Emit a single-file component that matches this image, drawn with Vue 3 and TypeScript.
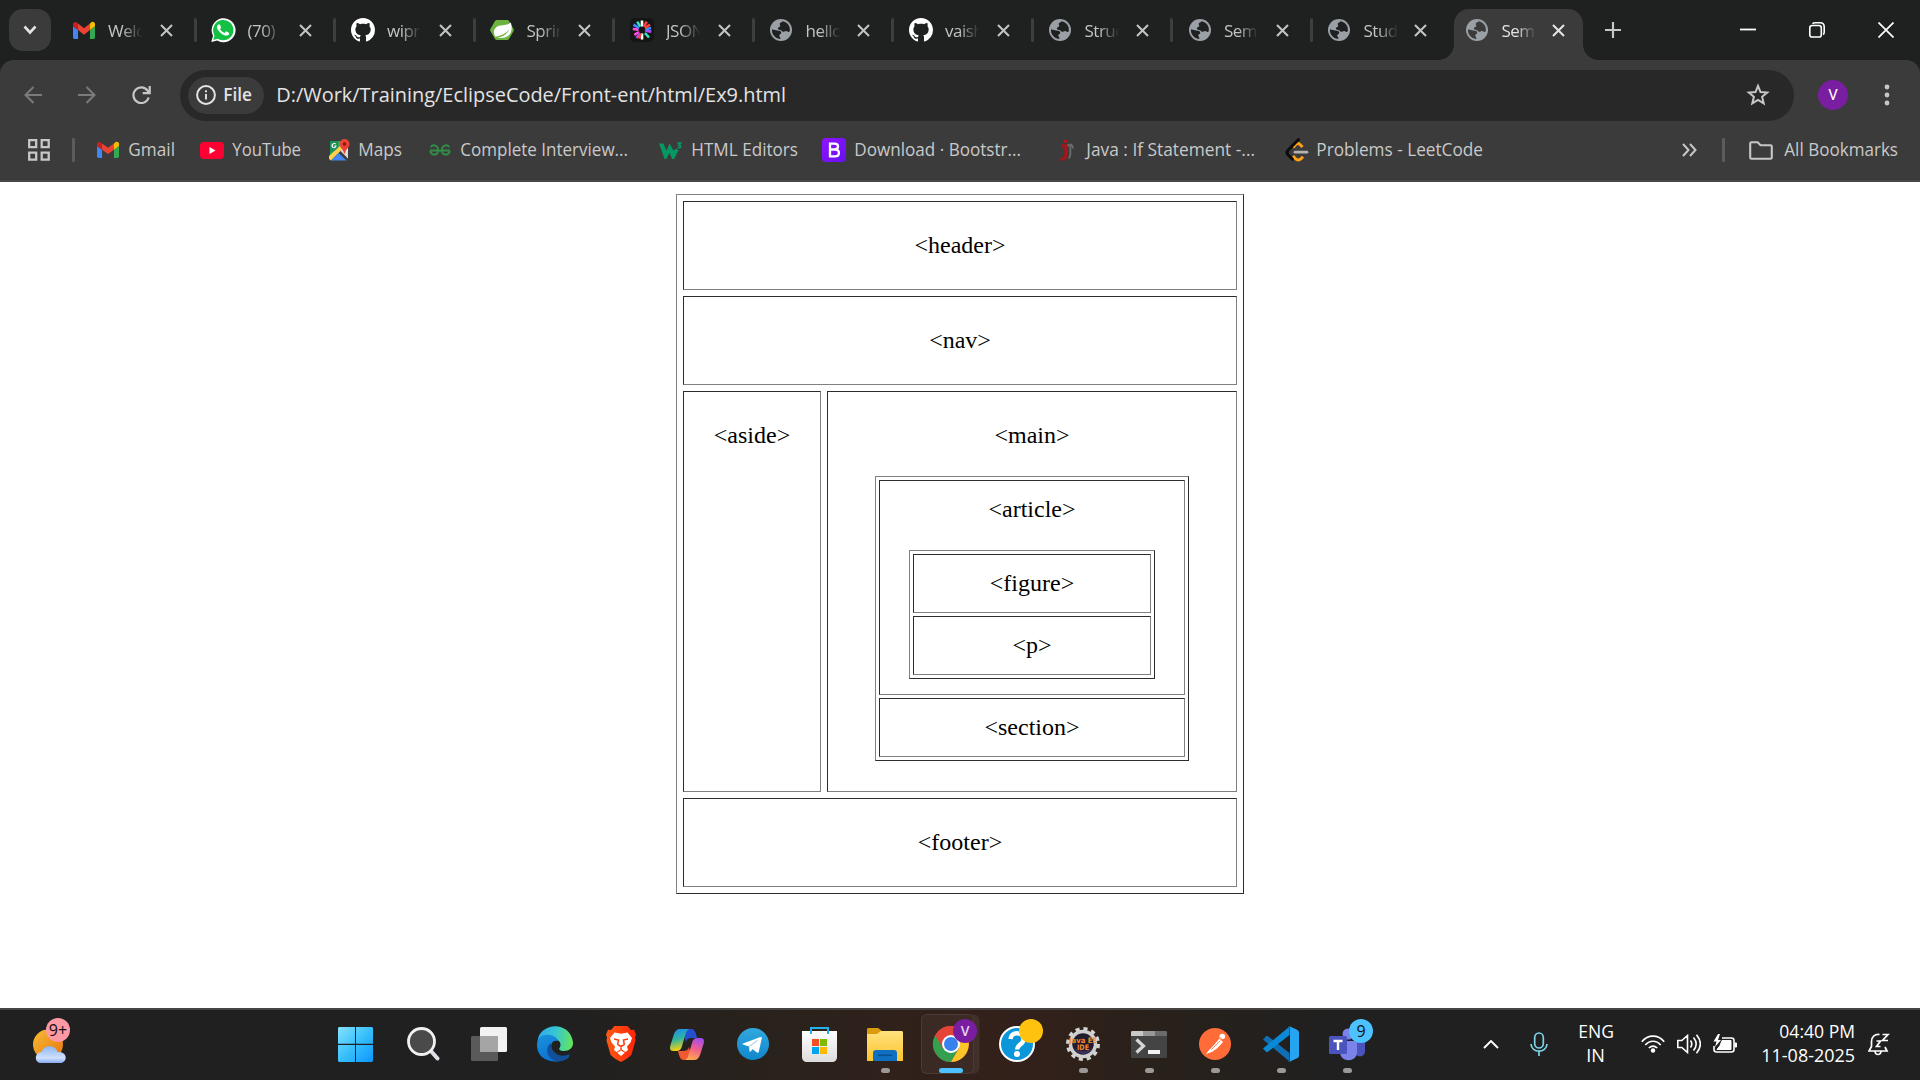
<script setup lang="ts">
import { h, type FunctionalComponent } from 'vue'

/* Line of interface text set to an exact advance width. */
const Label: FunctionalComponent<{
  text: string
  width: number
  size?: number
  color?: string
  weight?: number
  base?: number
}> = (p) =>
  h(
    'svg',
    { width: p.width, height: 24, viewBox: `0 0 ${p.width} 24`, style: 'display:block;overflow:visible;flex:none' },
    [
      h(
        'text',
        {
          x: -0.7,
          y: p.base ?? 18,
          textLength: p.width + 0.7,
          lengthAdjust: 'spacingAndGlyphs',
          fill: p.color ?? '#c9c9c9',
          'font-size': p.size ?? 17.6,
          'font-weight': p.weight ?? 400,
          'font-family': "'Open Sans', 'Noto Sans', sans-serif",
        },
        p.text,
      ),
    ],
  )
Label.props = ['text', 'width', 'size', 'color', 'weight', 'base']

const Icon: FunctionalComponent<{ name: string; w: number; h?: number }> = (p) =>
  h('svg', {
    width: p.w,
    height: p.h ?? p.w,
    viewBox: icons[p.name][0],
    preserveAspectRatio: 'none',
    fill: 'none',
    style: 'display:block;flex:none;overflow:visible',
    innerHTML: icons[p.name][1],
  })
Icon.props = ['name', 'w', 'h']

const icons: Record<string, [string, string]> = {
  gmail: ['0 0 24 18', '<path fill="#4285f4" d="M1.6 18h3.9V8.6L0 4.5v11.9C0 17.3.7 18 1.6 18z"/><path fill="#34a853" d="M18.5 18h3.9c.9 0 1.6-.7 1.6-1.6V4.500l-5.500 4.100z"/><path fill="#fbbc04" d="M18.500 1.700v6.900L24 4.500V2.300c0-2-2.300-3.200-3.900-2z"/><path fill="#ea4335" d="M5.500 8.600V1.700L12 6.600l6.500-4.900v6.900L12 13.500z"/><path fill="#c5221f" d="M0 2.300v2.200l5.500 4.100V1.700L3.900.4C2.300-.8 0 .3 0 2.300z"/>'],
  whatsapp: ['0 0 24 24', '<path fill="#fff" d="M.3 24l1.700-6.200A12 12 0 1 1 6.300 22.400z"/><path fill="#12c143" d="M2.300 21.900l1.200-4.500A10.200 10.200 0 1 1 6.700 20.700z"/><path fill="#fff" d="M17.472 14.382c-.297-.149-1.758-.867-2.03-.967-.273-.099-.471-.148-.67.15-.197.297-.767.966-.94 1.164-.173.199-.347.223-.644.075-.297-.15-1.255-.463-2.39-1.475-.883-.788-1.48-1.761-1.653-2.059-.173-.297-.018-.458.13-.606.134-.133.298-.347.446-.52.149-.174.198-.298.298-.497.099-.198.05-.371-.025-.52-.075-.149-.669-1.612-.916-2.207-.242-.579-.487-.5-.669-.51-.173-.008-.371-.01-.57-.01-.198 0-.52.074-.792.372-.272.297-1.04 1.016-1.04 2.479 0 1.462 1.065 2.875 1.213 3.074.149.198 2.096 3.2 5.077 4.487.709.306 1.262.489 1.694.625.712.227 1.36.195 1.871.118.571-.085 1.758-.719 2.006-1.413.248-.694.248-1.289.173-1.413-.074-.124-.272-.198-.57-.347"/>'],
  github: ['0 0 16 16', '<path fill="#fff" d="M8 0C3.580 0 0 3.580 0 8c0 3.540 2.290 6.530 5.470 7.590.4.070.550-.170.550-.380 0-.190-.010-.820-.010-1.490-2.010.370-2.530-.490-2.690-.940-.090-.230-.480-.940-.820-1.130-.280-.150-.680-.520-.010-.530.630-.010 1.080.580 1.230.820.720 1.210 1.870.870 2.330.660.070-.520.280-.870.510-1.070-1.780-.2-3.640-.890-3.640-3.950 0-.870.310-1.590.820-2.150-.080-.2-.360-1.020.080-2.120 0 0 .670-.210 2.200.820.640-.180 1.320-.270 2-.270s1.360.090 2 .270c1.530-1.040 2.200-.820 2.200-.820.440 1.100.160 1.920.080 2.120.510.560.820 1.270.820 2.150 0 3.070-1.870 3.750-3.650 3.950.290.250.540.730.540 1.480 0 1.070-.010 1.930-.010 2.200 0 .210.150.460.550.380A8.010 8.010 0 0 0 16 8c0-4.420-3.580-8-8-8z"/>'],
  spring: ['0 0 24 24', '<path fill="#6db33f" d="M7 1.200h10c.9 0 1.600.4 2 1.100l4.600 8.500c.4.8.4 1.600 0 2.400L19 21.700c-.4.700-1.100 1.100-2 1.100H7c-.9 0-1.600-.4-2-1.100L.4 13.200c-.4-.8-.4-1.600 0-2.400L5 2.300c.4-.7 1.100-1.100 2-1.100z"/><path fill="#fff" d="M20.800 3.800c.9 3.500 1.700 9.300-1.200 13.200-2.800 3.700-7.900 4.400-13 3.300 6.700-.4 10.800-4.200 12.600-8.500-3.200 4.300-7.600 6.600-13.800 7.500-3.400-5.200-.7-11.200 4.800-12.200 4.200-.8 8.400-.4 10.600-3.300z"/>'],
  json: ['0 0 24 24', '<rect width="24" height="24" rx="5" fill="#151515"/><g stroke-width="2.600"><path stroke="#fff" d="M12 2.500v6M12 15.500v6"/><path stroke="#ff4fd8" d="M2.800 11l5.800.6M4.300 16.800l4.700-2.800"/><path stroke="#a64dff" d="M6.500 20l3.400-4.500M15.300 12.600l6 1"/><path stroke="#34e0c2" d="M7.200 3.600l3 5M15 15l4 4.500"/><path stroke="#3f8cff" d="M3.500 6.600L9 10M15.200 11.300l6-1.300"/><path stroke="#ff4040" d="M16.800 3.600l-3 5M20 6.500l-5 3.500M10.500 15.500l-1.500 5"/></g>'],
  globe: ['0 0 22 22', '<circle cx="11" cy="11" r="11" fill="#9aa0a6"/><path fill="var(--land)" d="M12.500 2.300c-.6 1.300-2.300 1.200-2.700 2.200-.4 1.100.7 1.800.4 2.700-.4 1.100-2.500.8-2.400 2.200.1 1.300 2.100 1.300 3.300 1.900.9.500 1 1.500 2 1.500 1.100 0 1.900-1.100 3.100-.9.9.1 1.500 1 2.400 1 .6 0 .9-.3 1.100-.7C20.700 7.500 17.500 3 12.500 2.300z"/><path fill="var(--land)" d="M2 10.300c1.600.6 4.500 1.100 7 1.500 1.600.3 2.300 1 2.200 2.200-.2 1.200-2 1.200-2 2.500 0 1.200 1.300 1.500 1.200 2.700 0 .4-.2.700-.5.800C5.300 19.500 1.500 15.500 2 10.300z"/>'],
  youtube: ['0 0 24 17', '<rect width="24" height="17" rx="4" fill="#ff0033"/><path fill="#fff" d="M9.500 5l6 3.500-6 3.500z"/>'],
  maps: ['0 0 22 22', '<path fill="#34a853" d="M2 2h14v6L2 20.500z"/><path fill="#1e8e5a" d="M2 2h8v8L2 14z"/><path fill="#f1f1f1" d="M12 10l8 9.500V9z"/><path fill="#ffd04b" d="M1 17L12.500 6.500l2.500 3L3 21.500 1 20z"/><path fill="#4285f4" d="M3 21.500L10.500 14l8 7.500z"/><path fill="#d9d9d9" d="M12.500 12l7.500 7.500v-8z"/><path fill="#fff" d="M8.500 6.500H6.300v1h1.200c-.5 1.300-2.700 1-2.700-.8 0-1.600 1.600-2.200 2.600-1.300l.7-.8C6.300 3.100 3.500 4.200 3.500 6.700c0 3.400 5.100 3.300 5-.2z"/><path fill="#ea4335" d="M16.500 0a5 5 0 0 1 5 5c0 3.500-4.100 5.500-4.500 9.500h-1c-.4-4-4.500-6-4.500-9.500a5 5 0 0 1 5-5z"/><circle cx="16.500" cy="5" r="1.800" fill="#7d1d16"/>'],
  gfg: ['0 0 24 12', '<g stroke="#2f8d46" stroke-width="2"><path d="M1 6.500h21.800M2 3.200C3.500.6 9.800.2 10 6.200c0 5.500-7.800 6-8.700.5M22 3.200C20.500.6 14.200.2 14 6.200c0 5.500 7.800 6 8.700.5"/></g>'],
  w3: ['0 0 24 18', '<path fill="#059862" d="M0 1.500h4.600l3.200 7.700L11 1.500l4.200 7.700 2.600-2.400c.8.900 1.600 1.300 2.700 1.400L15.800 18h-2.200L11 11.500 7.600 18H5.800z"/><path stroke="#059862" stroke-width="1.700" d="M19.300 1.200h3.200l-1.700 2.200c2.700 0 2.200 3.300-1.300 2.400"/>'],
  bootstrap: ['0 0 24 24', '<defs><linearGradient id="bs" x2="1" y2="1"><stop stop-color="#9013fe"/><stop offset="1" stop-color="#6610f2"/></linearGradient></defs><rect width="24" height="24" rx="4" fill="url(#bs)"/><path stroke="#fff" stroke-width="2.300" d="M8 5.700h4.500c4.700 0 4.700 5.800 0 5.800H8h5c5.200 0 5.200 6.800 0 6.800H8z"/>'],
  java: ['0 0 16 22', '<ellipse cx="6.500" cy="2.300" rx="2.500" ry="1.800" fill="#b0161c"/><path stroke="#a3161c" stroke-width="3.400" d="M2.500 7h4.500v8.500c0 3.500-2 4.800-5.500 5"/><path stroke="#6a6a6a" stroke-width="2" d="M8.500 7c3-3 5.500-1 5.500 2.500M11.500 6.500c-1 4 1.500 8-1.500 13"/>'],
  leetcode: ['0 0 24 24', '<path stroke="#ffa116" stroke-width="3" d="M8 9.500l3-3.200c1.500-1.500 3-1 4.500.7l2 2M8 18l2.500 2.700c1.700 1.700 4 1.500 5.500 0l2-2"/><path stroke="#0c0c0c" stroke-width="3" stroke-linecap="round" d="M13.500 1.500L3 12.200c-1.400 1.500-1.400 3 0 4.500l4.500 4.500"/><path stroke="#b3b3b3" stroke-width="2.700" stroke-linecap="round" d="M10 14.200h12"/>'],
  weather: ['0 0 33 34', '<defs><linearGradient id="sun" x2="1" y2="1"><stop stop-color="#f6bd35"/><stop offset="1" stop-color="#e8740c"/></linearGradient><linearGradient id="cld" x2="0" y2="1"><stop stop-color="#8fb6f2"/><stop offset=".7" stop-color="#cfe0fb"/><stop offset="1" stop-color="#84aaf0"/></linearGradient></defs><circle cx="15" cy="15.500" r="15" fill="url(#sun)"/><path fill="url(#cld)" d="M8 34c-7 0-7-11 1-11 1-7 13-8 15.500 0C35 22 35 34 27 34z"/>'],
  windows: ['0 0 35 35', '<defs><linearGradient id="win" gradientUnits="userSpaceOnUse" x1="0" y1="0" x2="35" y2="35"><stop stop-color="#85e1ff"/><stop offset=".5" stop-color="#38c0fb"/><stop offset="1" stop-color="#0b96fc"/></linearGradient></defs><path fill="url(#win)" d="M1 0h16v16.700H0V1zM18 0h16l1 1v15.700H18zM0 18h17v17H1l-1-1zM18 18h17v16l-1 1H18z"/>'],
  search: ['0 0 33 34', '<path stroke="#dfe1e8" stroke-width="4" stroke-linecap="round" d="M23.500 23.500l7 8"/><circle cx="14.500" cy="14.500" r="13" fill="#4a4a4a" stroke="#f0f1f3" stroke-width="2.800"/>'],
  taskview: ['0 0 36 34', '<rect x="9" width="27" height="25" rx="1.500" fill="#f2f2f2"/><rect y="9" width="27" height="25" rx="1.500" fill="#5a5a5a"/><path d="M9 9h18v16H9z" fill="#a5a5a5"/>'],
  edge: ['0 0 36 36', '<defs><linearGradient id="ea" x1="0" y1=".3" x2="1" y2=".4"><stop stop-color="#2fa8e8"/><stop offset=".5" stop-color="#35c6d5"/><stop offset="1" stop-color="#63e55b"/></linearGradient><linearGradient id="eb" x2=".5" y2="1"><stop stop-color="#1a92dc"/><stop offset="1" stop-color="#0d6fd0"/></linearGradient></defs><path fill="url(#ea)" d="M.5 15C3-4 33-5.500 36 16c.5 6-4 9-9 9-4 0-5.500-1.500-4.500-3 2-3 1-7-3-8.500C12 9 3 11 .5 15z"/><path fill="url(#eb)" d="M0 19C0 8 12 7 18 11c3 2 3.500 4 3 4-6-1.500-8 4-6 9 2 6 9 9 15 6 2-1 3-1 2 .5C26 39 0 38 0 19z"/><path fill="#124f9a" d="M14 17c-6 4-5 15 5 18 6 .5 11-2 13.500-5.500.5-1-.5-1.500-2-.700C24 32 13 27 14 17z"/>'],
  brave: ['0 0 30 36', '<defs><linearGradient id="br" x2="1"><stop stop-color="#ff5a14"/><stop offset="1" stop-color="#fb2508"/></linearGradient></defs><path fill="url(#br)" d="M8.500 0h13L25 4l3-.2 2 4.700-1 3 .5 3-4 14c-2 3-6 5-10.500 7.500C10.500 33.500 6.500 31.500 4.500 28.500l-4-14 .5-3-1-3 2-4.700L5 4z"/><path fill="#fff" d="M8.500 6.500l6.500 1.300 6.500-1.300 4.500 5.500-1.500 4.500-3.500 4 1 3.500-2.500 2-3-2h-3l-3 2-2.500-2 1-3.500-3.500-4L4 12z"/><path fill="#fff" d="M15 24.500l3.800 2.200L15 30l-3.800-3.300z"/><path stroke="#fb3f0e" stroke-width="1.500" d="M8 13l4.500 1-.8 4.500 3.300 2 3.300-2-.8-4.500 4.500-1M15 20.500V24"/>'],
  copilot: ['0 0 34 31', '<defs><linearGradient id="ca" x2=".2" y2="1"><stop stop-color="#1b8cf2"/><stop offset=".5" stop-color="#2eb3a2"/><stop offset="1" stop-color="#f2d113"/></linearGradient><linearGradient id="cb" x1=".7" x2=".4" y2="1"><stop stop-color="#a24cf0"/><stop offset=".5" stop-color="#f0608c"/><stop offset="1" stop-color="#ffa84e"/></linearGradient></defs><path fill="#2450d0" d="M12 0h9c3 0 4 2 5 5l1 4h-6c-3 0-4 1-5 4z"/><path fill="#f0582f" d="M22 31h-8c-3 0-4-2-5-5l-1-4h5c3 0 5-1 6-4z"/><path fill="url(#ca)" d="M10 0h9c-2 1-3 3-4 7l-3 10c-1 4-3 5-6 5H3c-3 0-3.500-3-2.500-6L4 5c1-3 3-5 6-5z"/><path fill="url(#cb)" d="M24 31h-9c2-1 3-3 4-7l3-10c1-4 3-5 6-5h3c3 0 3.500 3 2.500 6L30 26c-1 3-3 5-6 5z"/>'],
  telegram: ['0 0 32 32', '<defs><linearGradient id="tg" x2="0" y2="1"><stop stop-color="#32a8e0"/><stop offset="1" stop-color="#0f87cc"/></linearGradient></defs><circle cx="16" cy="16" r="16" fill="url(#tg)"/><path fill="#fff" d="M6 15.500L23.500 9c.8-.3 1.500.2 1.300 1.300l-3 13.500c-.2 1-1 1.200-1.800.7l-4.300-3.200-2.200 2.200c-.5.500-1 .3-1-.5l-.5-4.500L6 16.600c-.6-.3-.6-.8 0-1.100z"/><path stroke="#8fc8ea" stroke-width="1" d="M12 18.500l8.500-6"/>'],
  store: ['0 0 35 35', '<defs><linearGradient id="st" x2="0" y2="1"><stop stop-color="#fff"/><stop offset="1" stop-color="#dcdcdc"/></linearGradient></defs><path fill="url(#st)" d="M0 4h35v26c0 3-2 5-5 5H5c-3 0-5-2-5-5z"/><path stroke="#23b0ef" stroke-width="2" d="M9 7V1h17v6"/><path fill="#f25022" d="M10 12h7v7h-7z"/><path fill="#7fba00" d="M18 12h7v7h-7z"/><path fill="#00a4ef" d="M10 20h7v7h-7z"/><path fill="#ffb900" d="M18 20h7v7h-7z"/>'],
  explorer: ['0 0 36 33', '<defs><linearGradient id="fx" x2="0" y2="1"><stop stop-color="#ffe17e"/><stop offset="1" stop-color="#fdc52d"/></linearGradient></defs><path fill="#dc9b0c" d="M0 1.500C0 .6.600 0 1.500 0H11l4 3-3 4H0z"/><path fill="url(#fx)" d="M0 6h10l4-3h20.500c.9 0 1.500.6 1.500 1.500V33H0z"/><path fill="#0f6fc0" d="M6 33v-8c0-2 1-3 3-3h18c2 0 3 1 3 3v8z"/><path stroke="#0a4f91" stroke-width="1.500" d="M11 27.300h14"/>'],
  chrome: ['0 0 36 36', '<circle cx="18" cy="18" r="18" fill="#e33b2e"/><path fill="#2a9b46" d="M18 36A18 18 0 0 1 2.400 9L10.200 22.500 18 18l7.800 4.500z"/><path fill="#fcc31e" d="M18 36l7.800-13.500L18 10h16a18 18 0 0 1-16 26z"/><path fill="#e33b2e" d="M18 10h16A18 18 0 0 0 2.400 9l7.800 13.500z"/><circle cx="18" cy="18" r="9" fill="#fff"/><circle cx="18" cy="18" r="7" fill="#2f7cf0"/>'],
  help: ['0 0 36 36', '<circle cx="18" cy="18" r="17" fill="#0a96d8" stroke="#fff" stroke-width="2"/><path stroke="#fff" stroke-width="4.500" d="M11.500 13c.5-8 13-7.500 13 .5 0 5-6.500 5-6.500 10"/><circle cx="18" cy="28" r="3" fill="#fff"/>'],
  eclipse: ['0 0 34 34', '<circle cx="17" cy="17" r="15" stroke="#d4d4d4" stroke-width="4" stroke-dasharray="4 3.854"/><circle cx="17" cy="17" r="12.500" fill="#211b2e" stroke="#cfcfcf" stroke-width="3.500"/><path fill="#3c2f58" d="M8 21c5 4 13 4 18 0-2 8-15 8-18 0z"/><text x="17" y="15.500" text-anchor="middle" textLength="28" lengthAdjust="spacingAndGlyphs" font-family="\'DejaVu Sans\', sans-serif" font-size="7.500" font-weight="700" fill="#f08a28">Java EE</text><text x="17" y="23" text-anchor="middle" textLength="12" lengthAdjust="spacingAndGlyphs" font-family="\'DejaVu Sans\', sans-serif" font-size="7.500" font-weight="700" fill="#f08a28">IDE</text>'],
  terminal: ['0 0 36 27', '<rect width="36" height="27" rx="1.500" fill="#444"/><path fill="#c9c9c9" d="M0 5V1.500C0 .6.600 0 1.500 0H12v5z"/><path fill="#989898" d="M12 0h12v5H12z"/><path fill="#6b6b6b" d="M24 0h10.500c.9 0 1.500.6 1.500 1.500V5H24z"/><path stroke="#d6d6d6" stroke-width="3.200" d="M5.500 8.500l7 6.500-7 6.500"/><path fill="#f2f2f2" d="M17 19h12v4H17z"/>'],
  postman: ['0 0 32 32', '<circle cx="16" cy="16" r="16" fill="#ff6c37"/><circle cx="23.300" cy="8.500" r="2.800" fill="#fff"/><path fill="#fff" d="M20.500 10.500l3.500 3.500-5.500 6c-3 2.500-6 4.500-11.500 6 2-3 4.500-5.500 7.500-8.500z"/><path stroke="#ff6c37" stroke-width=".8" d="M12.500 21.500l9-9M21 9.500l3.500 3"/>'],
  vscode: ['0 0 36 36', '<path fill="#0f6fb5" d="M0 13.500l3-3.200c.6-.5 1.400-.5 2 0L26.500 27v8.500z"/><path fill="#0a8ad6" d="M0 22.500l3 3.200c.6.500 1.400.5 2 0L26.500 9V.500z"/><path fill="#25a4f2" d="M26.500.2L34 3.700c1.200.6 2 1.500 2 2.900v22.800c0 1.400-.8 2.300-2 2.900l-7.500 3.500c-.8.300-1.200.1-1.500-.2 1 .4 2-.3 2-1.600V2c0-1.300-1-2-2-1.600.3-.3.700-.5 1.500-.2z"/>'],
  teams: ['0 0 36 34', '<circle cx="31" cy="9" r="4" fill="#5059c9"/><circle cx="19" cy="7" r="5.500" fill="#7b83eb"/><path fill="#4b53bc" d="M26 15h10v9c0 5-5 7-9 4z"/><path fill="#7b83eb" d="M12 14h14c1.200 0 2 .8 2 2v9c0 11-17 11-17 0z"/><rect y="9" width="18" height="18" rx="1.500" fill="#4b53bc"/><path stroke="#fff" stroke-width="2.400" d="M4.500 14h9M9 14v9"/>'],
}

interface Tab { icon: string; title: string; iw: number; ih: number; w: number; tight?: boolean; active?: boolean }
const tabs: Tab[] = [
  { icon: 'gmail', title: 'Welc', iw: 22, ih: 17, w: 139.5 },
  { icon: 'whatsapp', title: '(70)', iw: 24, ih: 24, w: 139.5 },
  { icon: 'github', title: 'wipr', iw: 24, ih: 24, w: 139.5 },
  { icon: 'spring', title: 'Sprin', iw: 24, ih: 22, w: 139.5 },
  { icon: 'json', title: 'JSON', iw: 24, ih: 24, w: 139.5 },
  { icon: 'globe', title: 'hello', iw: 22, ih: 22, w: 139.5 },
  { icon: 'github', title: 'vaish', iw: 24, ih: 24, w: 139.5 },
  { icon: 'globe', title: 'Struc', iw: 22, ih: 22, w: 139.5 },
  { icon: 'globe', title: 'Sem', iw: 22, ih: 22, w: 139.5 },
  { icon: 'globe', title: 'Stud', iw: 22, ih: 22, w: 138, tight: true },
  { icon: 'globe', title: 'Sem', iw: 22, ih: 22, w: 139.5, tight: true, active: true },
]

/* slot: width from this bookmark's icon to the next one */
const bookmarks = [
  { icon: 'gmail', iw: 22, ih: 16, text: 'Gmail', gap: 10, w: 46, slot: 103 },
  { icon: 'youtube', iw: 24, ih: 17, text: 'YouTube', gap: 9, w: 68, slot: 128 },
  { icon: 'maps', iw: 22, ih: 22, text: 'Maps', gap: 9, w: 43, slot: 101 },
  { icon: 'gfg', iw: 22, ih: 12, text: 'Complete Interview...', gap: 10, w: 167, slot: 230 },
  { icon: 'w3', iw: 23, ih: 17, text: 'HTML Editors', gap: 10, w: 106, slot: 163 },
  { icon: 'bootstrap', iw: 24, ih: 24, text: 'Download · Bootstr...', gap: 9, w: 166, slot: 237 },
  { icon: 'java', iw: 16, ih: 22, text: 'Java : If Statement -...', gap: 12, w: 168, slot: 226 },
  { icon: 'leetcode', iw: 24, ih: 24, text: 'Problems - LeetCode', gap: 8, w: 166, slot: 210 },
]

interface App { icon: string; w: number; h: number; dot?: boolean; badge?: string; kind?: string }
const apps: App[] = [
  { icon: 'windows', w: 35, h: 35 },
  { icon: 'search', w: 33, h: 34 },
  { icon: 'taskview', w: 36, h: 34 },
  { icon: 'edge', w: 36, h: 36 },
  { icon: 'brave', w: 30, h: 36 },
  { icon: 'copilot', w: 34, h: 31 },
  { icon: 'telegram', w: 32, h: 32 },
  { icon: 'store', w: 35, h: 35 },
  { icon: 'explorer', w: 36, h: 33, dot: true },
  { icon: 'chrome', w: 36, h: 36, badge: 'V', kind: 'profile' },
  { icon: 'help', w: 36, h: 36, badge: ' ', kind: 'alert' },
  { icon: 'eclipse', w: 34, h: 34, dot: true },
  { icon: 'terminal', w: 36, h: 27, dot: true },
  { icon: 'postman', w: 32, h: 32, dot: true },
  { icon: 'vscode', w: 36, h: 36, dot: true },
  { icon: 'teams', w: 36, h: 34, dot: true, badge: '9', kind: 'count' },
]
</script>

<template>
  <div class="screen">
    <div class="tabstrip">
      <button class="tabsearch">
        <svg width="14" height="10" viewBox="0 0 14 10"><path d="M1.500 1.500L7 7.500l5.500-6" fill="none" stroke="#e3e3e3" stroke-width="2.600" /></svg>
      </button>
      <div v-for="(t, i) in tabs" :key="i" class="tab" :class="{ active: t.active, tight: t.tight }" :style="{ width: t.w + 'px' }">
        <span class="favicon"><Icon :name="t.icon" :w="t.iw" :h="t.ih" /></span>
        <span class="title">{{ t.title }}</span>
        <svg class="x" width="13" height="13" viewBox="0 0 13 13"><path d="M1 1l11 11M12 1L1 12" stroke="currentColor" stroke-width="2.100" /></svg>
        <i v-if="!t.active && i < 9" class="divider"></i>
      </div>
      <svg class="newtab" width="16" height="16" viewBox="0 0 16 16"><path d="M8 0v16M0 8h16" stroke="#c7c7c7" stroke-width="2.200" /></svg>
      <div class="winctl">
        <svg width="16" height="16" viewBox="0 0 16 16"><path d="M0 7.500h16" stroke="#fff" stroke-width="1.800" /></svg>
        <svg width="16" height="16" viewBox="0 0 16 16" fill="none" stroke="#fff" stroke-width="1.600"><rect x=".8" y="3.500" width="11.500" height="11.500" rx="2.300" /><path d="M3.500 1.700C4.200 1 5 .8 6 .8h5c2.600 0 4.200 1.600 4.200 4.200v5c0 1-.3 1.900-1 2.600" /></svg>
        <svg width="16" height="16" viewBox="0 0 16 16"><path d="M.5.5l15 15M15.500.5l-15 15" stroke="#fff" stroke-width="1.700" /></svg>
      </div>
    </div>

    <div class="toolbar">
      <div class="addressrow">
        <svg class="back" width="18" height="18" viewBox="0 0 18 18" fill="none" stroke="#7b7b7b" stroke-width="2"><path d="M18 9H2M9.500 1L1.500 9l8 8" /></svg>
        <svg class="fwd" width="18" height="18" viewBox="0 0 18 18" fill="none" stroke="#7b7b7b" stroke-width="2"><path d="M0 9h16M8.500 1l8 8-8 8" /></svg>
        <svg class="reload" width="19" height="18" viewBox="0 0 19 18" fill="none" stroke="#c7c7c7" stroke-width="2.200"><path d="M16.700 11.500A7.800 7.800 0 1 1 15.500 4.500L17.500 7" /><path d="M17.700 0v7.200h-7" /></svg>
        <div class="omnibox">
          <div class="chip">
            <svg width="20" height="20" viewBox="0 0 20 20"><circle cx="10" cy="10" r="8.900" fill="none" stroke="#e3e3e3" stroke-width="2" /><path d="M10 9v5.500M10 5.300v2" stroke="#e3e3e3" stroke-width="1.900" /></svg>
            <Label text="File" :width="28" :size="17.5" :weight="600" color="#e3e3e3" />
          </div>
          <Label class="url" text="D:/Work/Training/EclipseCode/Front-ent/html/Ex9.html" :width="509" :size="20.3" :base="19" color="#e3e3e3" />
          <svg class="star" width="24" height="24" viewBox="0 0 24 24" fill="none" stroke="#c7c7c7" stroke-width="2"><path d="M12 2.800l2.500 6.200 6.700.5-5.100 4.300 1.600 6.500-5.700-3.500-5.700 3.500 1.600-6.500L2.800 9.500 9.500 9z" /></svg>
        </div>
        <div class="avatar">V</div>
        <svg class="menu" width="6" height="22" viewBox="0 0 6 22" fill="#c7c7c7"><circle cx="3" cy="3" r="2.400" /><circle cx="3" cy="11" r="2.400" /><circle cx="3" cy="19" r="2.400" /></svg>
      </div>
      <div class="bookmarks">
        <svg width="22" height="22" viewBox="0 0 22 22" fill="none" stroke="#c7c7c7" stroke-width="2.300"><path d="M1.200 1.200h7v7h-7zM13.700 1.200h7v7h-7zM1.200 13.700h7v7h-7zM13.700 13.700h7v7h-7z" /></svg>
        <i class="bar first"></i>
        <div v-for="b in bookmarks" :key="b.text" class="bookmark" :style="{ width: b.slot + 'px', gap: b.gap + 'px' }">
          <Icon :name="b.icon" :w="b.iw" :h="b.ih" />
          <Label :text="b.text" :width="b.w" />
        </div>
        <svg class="more" width="15" height="14" viewBox="0 0 15 14" fill="none" stroke="#c7c7c7" stroke-width="2"><path d="M1 1l5.500 6L1 13M8 1l5.500 6L8 13" /></svg>
        <i class="bar second"></i>
        <svg class="folder" width="24" height="19" viewBox="0 0 24 19" fill="none" stroke="#c7c7c7" stroke-width="2.100"><path d="M1.200 2.500c0-.8.500-1.300 1.300-1.300h6.200l2.800 3h10c.8 0 1.300.5 1.300 1.300v11c0 .8-.5 1.300-1.300 1.300h-19c-.8 0-1.300-.5-1.300-1.300z" /></svg>
        <Label text="All Bookmarks" :width="113" />
      </div>
    </div>

    <div class="page">
      <div class="frame outer">
        <div class="cell tall">&lt;header&gt;</div>
        <div class="cell tall">&lt;nav&gt;</div>
        <div class="middle">
          <div class="cell aside">&lt;aside&gt;</div>
          <div class="cell main">
            <span>&lt;main&gt;</span>
            <div class="frame mid">
              <div class="cell article">
                <span>&lt;article&gt;</span>
                <div class="frame inner">
                  <div class="cell short">&lt;figure&gt;</div>
                  <div class="cell short">&lt;p&gt;</div>
                </div>
              </div>
              <div class="cell short">&lt;section&gt;</div>
            </div>
          </div>
        </div>
        <div class="cell tall">&lt;footer&gt;</div>
      </div>
    </div>

    <div class="taskbar">
      <div class="weather"><Icon name="weather" :w="33" :h="34" /><b class="badge alerts">9+</b></div>
      <div class="apps">
        <div v-for="a in apps" :key="a.icon" class="app" :class="{ current: a.icon === 'chrome', start: a.icon === 'windows' }">
          <Icon :name="a.icon" :w="a.w" :h="a.h" />
          <b v-if="a.badge" class="badge" :class="a.kind">{{ a.badge }}</b>
          <i v-if="a.dot" class="dot"></i>
        </div>
      </div>
      <div class="tray">
        <svg class="chev" width="16" height="9" viewBox="0 0 16 9"><path d="M1 8l7-7 7 7" fill="none" stroke="#fff" stroke-width="1.900" /></svg>
        <svg class="mic" width="18" height="24" viewBox="0 0 18 24" fill="none" stroke="#7cd3ea" stroke-width="1.700"><rect x="4.700" y="1" width="8.600" height="15" rx="4.300" /><path d="M1 12c.5 9.500 15.500 9.500 16 0M9 19v5" /></svg>
        <div class="lang"><Label text="ENG" :width="35" :size="17.6" color="#fff" /><Label text="IN" :width="18" :size="17.6" color="#fff" /></div>
        <svg class="wifi" width="24" height="18" viewBox="0 0 24 18" fill="none" stroke="#fff" stroke-width="1.700"><path d="M.8 6.800c6.200-7.500 16.200-7.500 22.400 0M4.300 10c4.500-5 10.900-5 15.400 0M7.800 13c2.700-2.500 5.700-2.500 8.400 0" /><circle cx="12" cy="15.500" r="2.200" fill="#fff" stroke="none" /></svg>
        <svg class="vol" width="24" height="20" viewBox="0 0 24 20" fill="none" stroke="#fff" stroke-width="1.600"><path d="M.8 6.500h4L10.500 1.500v17L4.800 13.500h-4zM13.500 6.500c1.500 2 1.500 5 0 7M16.500 3.500c3.300 4 3.300 9 0 13M19.500.8c5 6 5 12.500 0 18.500" /></svg>
        <svg class="bat" width="24" height="20" viewBox="0 0 24 20" fill="none" stroke="#fff" stroke-width="1.600"><path d="M9 4h9.500c1.500 0 2.500 1 2.500 2.500v9c0 1.500-1 2.500-2.500 2.500H3.500C2 18 1 17 1 15.500V12" /><path fill="#fff" d="M9 6.500h9v9H4l3-4zM22 9v4h1.500V9z" stroke-width="1" /><path fill="#fff" stroke="none" d="M5 0L.5 7.500h3L2 13l6-7H5L7 0z" /></svg>
        <div class="clock"><Label text="04:40 PM" :width="75" :size="17.6" color="#fff" /><Label text="11-08-2025" :width="93" :size="17.6" color="#fff" /></div>
        <svg class="bell" width="22" height="23" viewBox="0 0 22 23" fill="none" stroke="#fff" stroke-width="1.700"><path d="M11.500 1.500C6.500 1 3.500 4 3.500 8.500v5L1 18h18l-2-4M7 18.500c.5 4 5.500 4 6 0" /><path d="M14.500 1.500h5.500l-5.500 6H20M8.500 8h4l-4 5.500h4" /></svg>
      </div>
    </div>
  </div>
</template>

<style>
html,
body {
  margin: 0;
  background: #fff;
}
</style>

<style scoped>
.screen {
  width: 1920px;
  height: 1080px;
  display: flex;
  flex-direction: column;
  overflow: hidden;
  background: linear-gradient(#1f2120 80px, #fff 80px);
  font-family: 'Open Sans', 'Noto Sans', sans-serif;
}
.tabstrip {
  height: 60px;
  flex: none;
  display: flex;
  align-items: center;
  background: #1f2120;
  padding-left: 9px;
}
.tabsearch {
  width: 42px;
  height: 42px;
  padding: 0;
  margin-right: 5px;
  border: 0;
  border-radius: 14px;
  background: #3b3b3b;
  display: flex;
  align-items: center;
  justify-content: center;
}
.tab {
  --land: #1f2120;
  height: 51px;
  margin-top: 9px;
  padding-bottom: 9px;
  box-sizing: border-box;
  display: flex;
  align-items: center;
  flex: none;
  position: relative;
  color: #c3c3c3;
}
.favicon {
  width: 24px;
  margin-left: 15.5px;
  display: flex;
  justify-content: center;
}
.title {
  width: 35px;
  margin: 2px 0 0 12.5px;
  overflow: hidden;
  white-space: nowrap;
  font-size: 17px;
  line-height: 24px;
  letter-spacing: -0.5px;
  -webkit-mask-image: linear-gradient(90deg, #000 40%, transparent 98%);
  mask-image: linear-gradient(90deg, #000 40%, transparent 98%);
}
.x {
  margin-left: 16.5px;
}
.tight .x {
  margin-left: 15px;
}
.divider {
  width: 3px;
  height: 24px;
  border-radius: 2px;
  background: #3d3e3d;
  margin-left: auto;
  margin-right: -1px;
}
.tab.active {
  --land: #3b3b3b;
  color: #e3e3e3;
}
.tab.active::before {
  content: '';
  position: absolute;
  z-index: 0;
  left: 4.5px;
  top: 0;
  width: 129px;
  height: 51px;
  border-radius: 15px 15px 0 0;
  background: #3b3b3b;
}
.tab.active::after {
  content: '';
  position: absolute;
  left: -10.5px;
  bottom: 0;
  width: 159px;
  height: 15px;
  background:
    radial-gradient(circle at 0 0, transparent 14.5px, #3b3b3b 15px) 0 0 / 15px 15px no-repeat,
    radial-gradient(circle at 15px 0, transparent 14.5px, #3b3b3b 15px) 144px 0 / 15px 15px no-repeat;
}
.tab.active > * {
  position: relative;
  z-index: 1;
}
.newtab {
  margin-left: 16px;
}
.winctl {
  margin-left: auto;
  margin-right: 26.5px;
  display: flex;
  gap: 53px;
}
.toolbar {
  height: 122px;
  flex: none;
  box-sizing: border-box;
  background: #3b3b3b;
  border-bottom: 2px solid #474747;
  border-radius: 14px 14px 0 0;
}
.addressrow {
  display: flex;
  align-items: center;
  height: 70px;
  padding-left: 24px;
}
.fwd {
  margin-left: 36px;
}
.reload {
  margin-left: 35.5px;
}
.omnibox {
  width: 1614px;
  height: 51px;
  margin-left: 29.5px;
  border-radius: 26px;
  background: #282828;
  display: flex;
  align-items: center;
  box-sizing: border-box;
  padding: 0 24px 0 8px;
}
.chip {
  width: 76px;
  height: 37px;
  border-radius: 19px;
  background: #3b3b3b;
  display: flex;
  align-items: center;
  gap: 8px;
  box-sizing: border-box;
  padding-left: 8px;
}
.url {
  margin-left: 12.5px;
}
.star {
  margin-left: auto;
}
.avatar {
  width: 30px;
  height: 30px;
  margin-left: 24px;
  border-radius: 50%;
  background: #7a1ea1;
  color: #fff;
  font: 15px/30px Roboto, sans-serif;
  text-align: center;
}
.menu {
  margin-left: 36px;
}
.bookmarks {
  height: 40px;
  display: flex;
  align-items: center;
  padding-left: 28px;
}
.bar {
  width: 3px;
  height: 24px;
  border-radius: 1px;
  background: #5c5c5c;
}
.bar.first {
  margin: 0 22px 0 22px;
}
.bookmark {
  display: flex;
  align-items: center;
  flex: none;
}
.more {
  margin-left: 187px;
}
.bar.second {
  margin: 0 24px 0 25px;
}
.folder {
  margin-right: 12px;
}
.page {
  flex: 1;
  background: #fff;
  padding-top: 12px;
  display: flex;
  justify-content: center;
  align-items: flex-start;
}
.frame,
.cell {
  box-sizing: border-box;
  border: 1px solid;
}
.frame {
  border-color: #808080 #2c2c2c #2c2c2c #808080;
  display: flex;
  flex-direction: column;
}
.cell {
  border-color: #2c2c2c #808080 #808080 #2c2c2c;
  font: 24px/27px 'Liberation Serif', serif;
  color: #000;
  text-align: center;
}
.outer {
  width: 568px;
  height: 700px;
  padding: 6px;
  gap: 6px;
}
.tall {
  height: 89px;
  padding-top: 30px;
}
.middle {
  display: flex;
  gap: 6px;
  height: 401px;
}
.aside {
  width: 138px;
  padding-top: 30px;
}
.main {
  width: 410px;
  padding-top: 30px;
  display: flex;
  flex-direction: column;
  align-items: center;
}
.mid {
  width: 314px;
  height: 285px;
  margin-top: 27px;
  padding: 3px;
  gap: 3px;
}
.article {
  height: 215px;
  padding-top: 15px;
  display: flex;
  flex-direction: column;
  align-items: center;
}
.inner {
  width: 246px;
  height: 129px;
  margin-top: 27px;
  padding: 3px;
  gap: 3px;
}
.short {
  height: 59px;
  padding-top: 15px;
}
.taskbar {
  height: 72px;
  flex: none;
  box-sizing: border-box;
  border-top: 2px solid #474543;
  background: linear-gradient(90deg, #202020 0, #202020 560px, #2a221c 780px, #33201a 960px, #32211a 1040px, #2a211a 1130px, #202020 1330px);
  display: flex;
}
.weather {
  width: 291px;
  padding: 19px 0 0 33px;
  position: relative;
}
.badge {
  position: absolute;
  left: 35px;
  top: 9px;
  width: 24px;
  height: 24px;
  border-radius: 50%;
  text-align: center;
  font: 16px/24px 'Open Sans', sans-serif;
  color: #111;
}
.alerts {
  left: 46px;
  top: 8px;
  background: #ff99a4;
  font-size: 16px;
}
.apps {
  display: flex;
}
.app {
  width: 66px;
  height: 68px;
  display: flex;
  align-items: center;
  justify-content: center;
  position: relative;
}
.app.start {
  box-sizing: border-box;
  padding-right: 3px;
}
.profile,
.alert,
.count {
  left: 35px;
}
.profile {
  background: #7a1ea1;
  color: #e6d3ee;
  font-size: 14px;
  font-weight: 600;
}
.alert {
  background: #ffc20e;
}
.count {
  background: #4cc2ff;
}
.dot {
  position: absolute;
  bottom: 5px;
  width: 9px;
  height: 5px;
  border-radius: 3px;
  background: #9b9896;
}
.current::before {
  content: '';
  position: absolute;
  left: 3px;
  top: 4px;
  width: 53px;
  height: 60px;
  box-sizing: border-box;
  border-radius: 6px;
  border: 1px solid #ffffff14;
  background: #ffffff0c;
  box-shadow: 6px 0 0 -0.5px #ffffff12;
}
.current::after {
  content: '';
  position: absolute;
  left: 21px;
  bottom: 5px;
  width: 24px;
  height: 5px;
  border-radius: 3px;
  background: #4cc2ff;
}
.tray {
  flex: 1;
  display: flex;
  align-items: center;
  height: 68px;
}
.chev {
  margin-left: 103px;
}
.mic {
  margin-left: 31px;
}
.lang {
  width: 34px;
  margin-left: 31px;
  display: flex;
  flex-direction: column;
  align-items: center;
}
.wifi {
  margin-left: 28px;
}
.vol,
.bat {
  margin-left: 12px;
}
.clock {
  width: 92px;
  margin-left: 26px;
  display: flex;
  flex-direction: column;
  align-items: flex-end;
}
.bell {
  margin-left: 13px;
}
</style>
